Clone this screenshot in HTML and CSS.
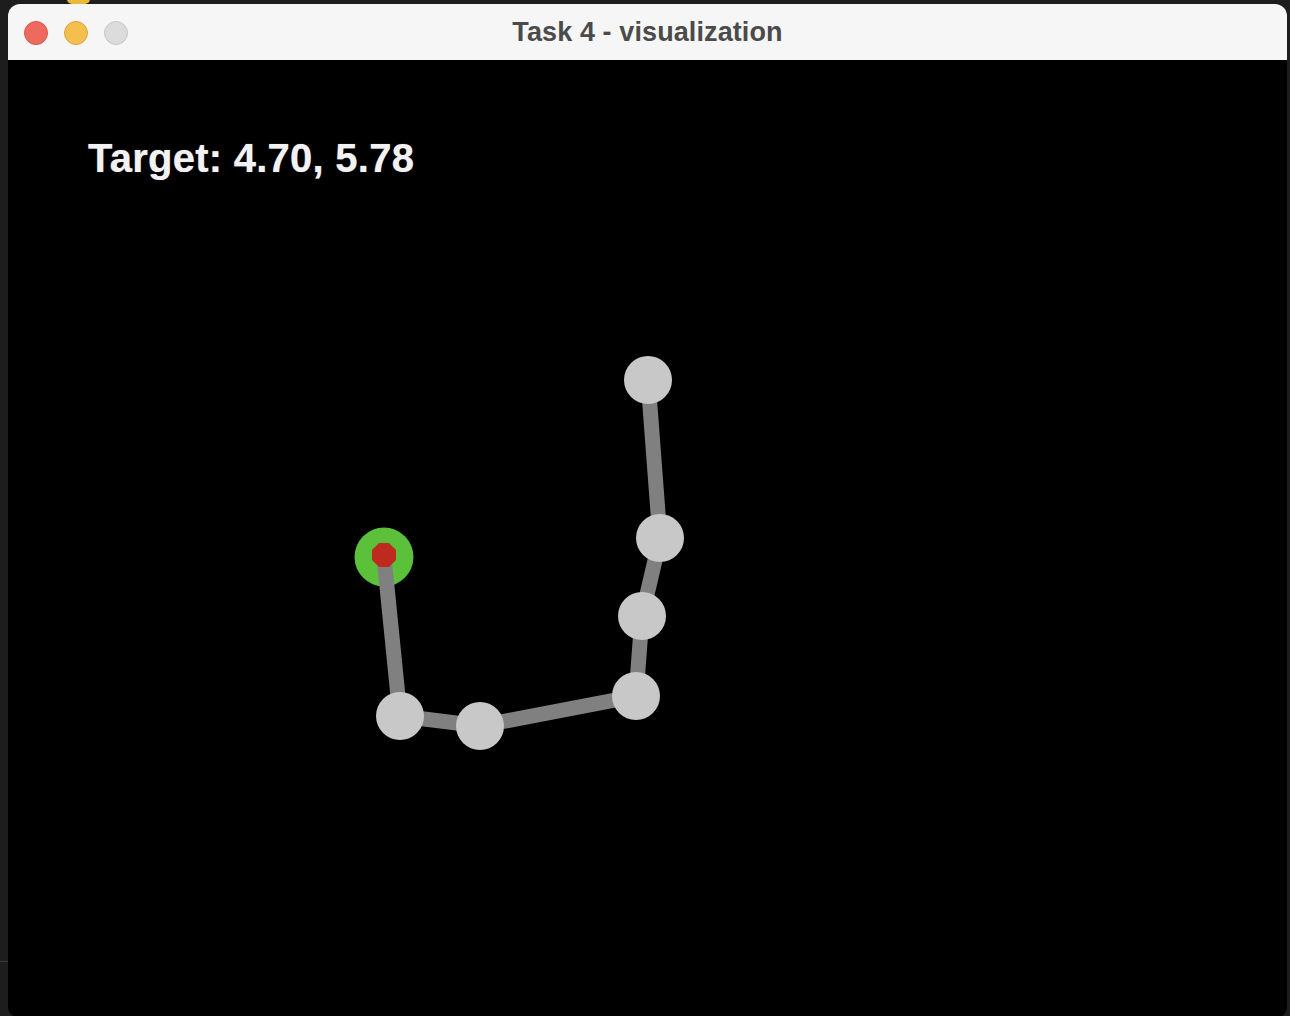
FILE: index.html
```html
<!DOCTYPE html>
<html>
<head>
<meta charset="utf-8">
<title>Task 4 - visualization</title>
<link rel="stylesheet" href="styles.css">
</head>
<body>
<div class="desk">
  <div class="peek"></div>
  <div class="edge-mark"></div>
  <div class="window">
    <div class="titlebar">
      <div class="lights">
        <span class="light red"></span>
        <span class="light yellow"></span>
        <span class="light gray"></span>
      </div>
      <div class="title">Task 4 - visualization</div>
      <div class="spacer"></div>
    </div>
    <div class="canvas">
      <svg class="scene" viewBox="8 60 1279 956" width="1279" height="956">
        <circle cx="384" cy="557" r="29.5" fill="#5cc13a"/>
        <polyline points="384,557 400,716 480,726 636,696 642,616 660,539 648,380" fill="none" stroke="#808080" stroke-width="15" stroke-linejoin="miter"/>
        <g fill="#c8c8c8">
          <circle cx="648" cy="380" r="24"/>
          <circle cx="660" cy="538" r="24"/>
          <circle cx="642" cy="616" r="24"/>
          <circle cx="636" cy="696" r="24"/>
          <circle cx="480" cy="726" r="24"/>
          <circle cx="400" cy="716" r="24"/>
        </g>
        <polygon points="379,543 389,543 396,550 396,560 389,567 379,567 372,560 372,550" fill="#bf2a1f"/>
      </svg>
      <div class="label">Target: 4.70, 5.78</div>
    </div>
  </div>
</div>
</body>
</html>
```
FILE: styles.css
```css
html, body {
  margin: 0;
  padding: 0;
  background: #1d1d1d;
  width: 1290px;
  height: 1016px;
  overflow: hidden;
}
.desk {
  position: relative;
  width: 1290px;
  height: 1016px;
  padding: 4px 3px 0 8px;
  box-sizing: border-box;
}
.peek {
  position: absolute;
  left: 67px;
  top: -6px;
  width: 23px;
  height: 10px;
  background: #e8b93a;
  border-radius: 6px;
}
.edge-mark {
  position: absolute;
  left: 0;
  top: 961px;
  width: 8px;
  height: 1px;
  background: #3a3a3a;
}
.window {
  width: 1279px;
  height: 1014px;
  border-radius: 12px;
  overflow: hidden;
  display: flex;
  flex-direction: column;
  background: #000;
}
.titlebar {
  height: 56px;
  flex: none;
  background: #f6f6f6;
  display: grid;
  grid-template-columns: 1fr auto 1fr;
  align-items: center;
  padding: 0 16px;
}
.lights {
  display: flex;
  gap: 16px;
  align-items: center;
}
.light {
  width: 24px;
  height: 24px;
  border-radius: 50%;
  box-sizing: border-box;
}
.light.red { background: #ee6a5f; border: 1px solid #d9544b; }
.light.yellow { background: #f5bf4f; border: 1px solid #dba540; }
.light.gray { background: #dcdcdc; border: 1px solid #c6c6c6; }
.title {
  font-family: "Liberation Sans", Arial, sans-serif;
  font-weight: bold;
  font-size: 27px;
  line-height: 56px;
  color: #4b4b4b;
  letter-spacing: 0.1px;
  padding-bottom: 2px;
}
.canvas {
  position: relative;
  flex: 1;
  background: #000;
  padding: 78px 0 0 80px;
}
.scene {
  position: absolute;
  left: 0;
  top: 0;
  display: block;
}
.label {
  position: relative;
  font-family: "Liberation Sans", Arial, sans-serif;
  font-weight: bold;
  font-size: 40px;
  line-height: 40px;
  letter-spacing: 0.25px;
  color: #f2f2f2;
  text-shadow: 0 0 1px rgba(255,255,255,0.6);
}
```
